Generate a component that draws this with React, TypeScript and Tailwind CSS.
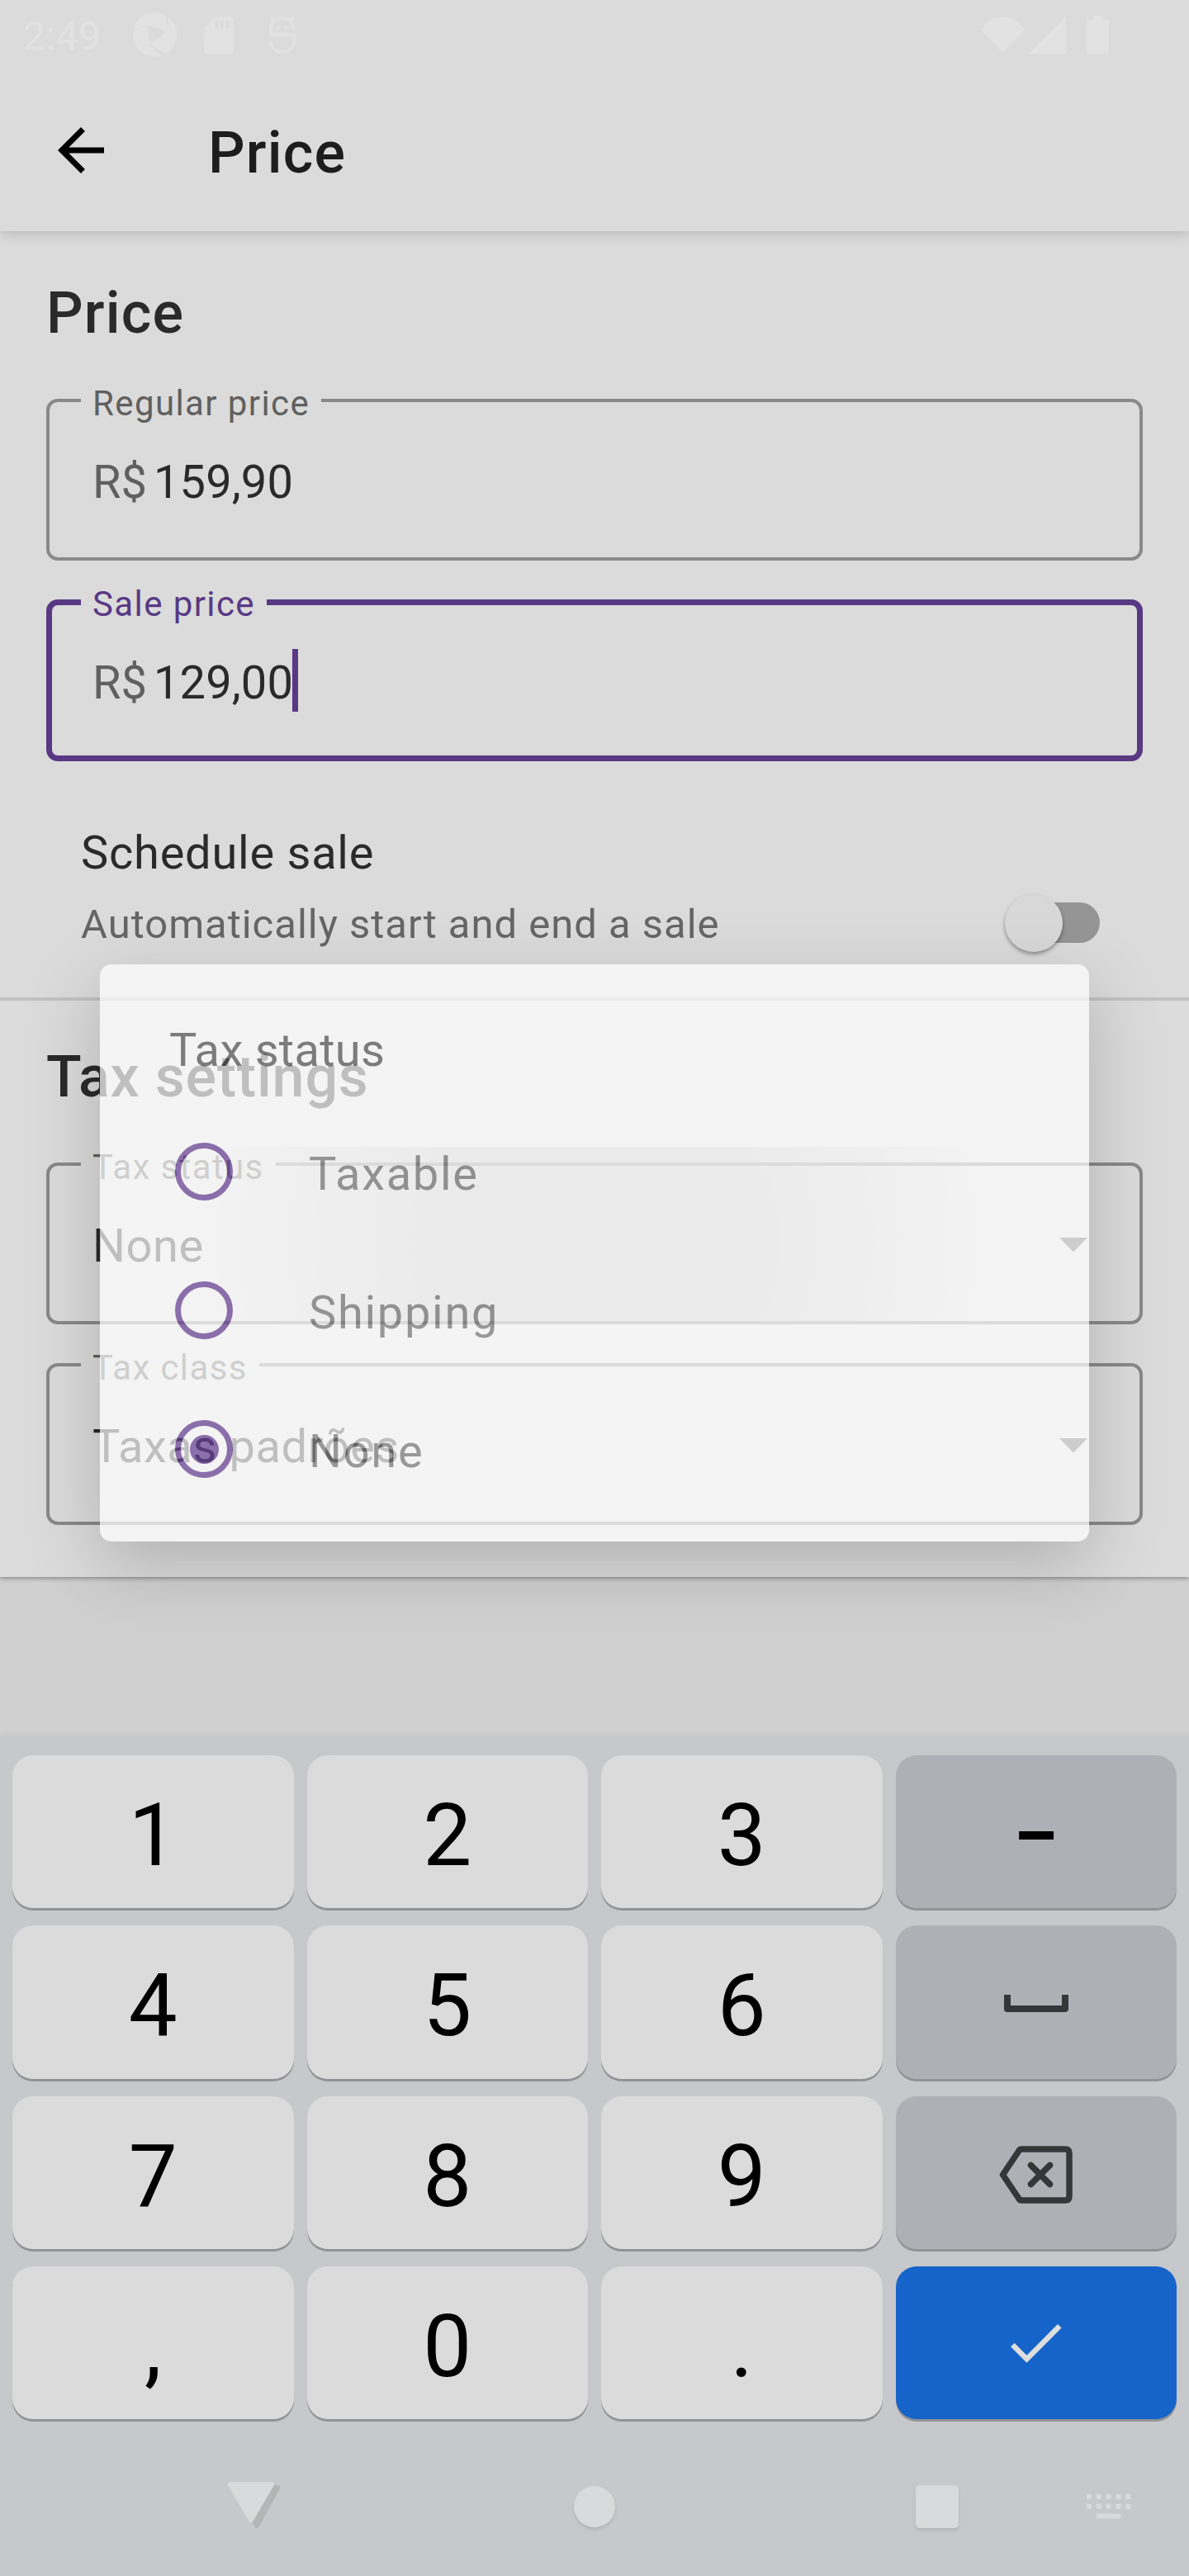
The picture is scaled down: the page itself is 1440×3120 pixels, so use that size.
import React from "react";

function Field({
  label,
  value,
  prefix,
  focused = false,
  select = false,
}: {
  label: string;
  value: string;
  prefix?: string;
  focused?: boolean;
  select?: boolean;
}) {
  return (
    <fieldset
      className={
        "flex h-[196px] flex-col rounded-[14px] " +
        (focused ? "border-[7px] border-[#593983]" : "border-4 border-[#898989]")
      }
    >
      <legend
        className={
          "whitespace-nowrap px-[14px] text-[42px] " +
          (focused
            ? "ml-[35px] h-[7px] leading-[7px] text-[#593983]"
            : "ml-[38px] h-[4px] leading-[4px] text-[#606060]")
        }
      >
        <span className={"relative tracking-[1.4px] " + (focused ? "top-[2px]" : "top-[4px]")}>{label}</span>
      </legend>
      <div
        className={
          "flex items-center text-[56px] leading-[64px] " + (focused ? "pl-[49px] pt-[62px]" : "pl-[52px] pt-[65px]")
        }
      >
        {prefix && <span className="mr-[8px] text-[#606060]">{prefix}</span>}
        <span className={(prefix ? "tracking-[0.1px]" : "tracking-[0.6px]") + " text-[#2a2a2a]"}>{value}</span>
        {focused && <span className="-my-2 -ml-px h-[76px] w-[7px] translate-y-[-3px] bg-[#593983]" />}
        {select && (
          <svg viewBox="0 0 34 18" className="-mt-[3px] ml-auto mr-[63px] h-[18px] w-[34px] fill-[#585858]">
            <path d="M0 0h34L17 17.5z" />
          </svg>
        )}
      </div>
    </fieldset>
  );
}

function StatusBar() {
  return (
    <div className="flex h-[84px] items-center text-[#e2e2e2]">
      <span className="ml-[28px] w-[132px] pt-[4px] text-[49px] leading-[56px]">2:49</span>
      <svg viewBox="0 0 54 54" className="ml-[1px] h-[54px] w-[54px]" fill="currentColor">
        <path d="M0 22A27 27 0 0 1 39 3Q43 13 39 24Q24 10 0 22z" />
        <path d="M43 6A27 27 0 0 1 41 50Q28 47 21 36Q43 29 43 6z" />
        <path d="M0 25Q7 17 19 18Q15 42 36 52A27 27 0 0 1 0 25z" />
      </svg>
      <svg viewBox="0 0 36 45" className="ml-[32px] h-[45px] w-[36px]">
        <path fill="currentColor" d="M13 0h19q4 0 4 4v37q0 4-4 4H4q-4 0-4-4V14z" />
        <path className="stroke-[#dbdbdb]" strokeWidth="4" d="M15.500 5v9M22 5v9M28.500 5v9" />
      </svg>
      <svg viewBox="0 0 32 45" className="ml-[43px] h-[45px] w-[32px]" fill="none" stroke="currentColor" strokeWidth="4">
        <path d="M30 16v-1A14 13 0 0 0 2 15v7h28v9a14 12 0 0 1-28 0v-2M5 5L2 1M27 5l3-4" />
        <path d="M11 11.500v4M20.500 11.500v4" />
      </svg>
      <svg viewBox="0 0 53 45" className="ml-[830px] h-[45px] w-[53px]" fill="currentColor">
        <path d="M0 16Q11 0 26.500 0T53 16L26.500 44z" />
      </svg>
      <svg viewBox="0 0 45 45" className="ml-[5px] h-[45px] w-[45px]" fill="currentColor">
        <path d="M45 0v45H0z" />
      </svg>
      <svg viewBox="0 0 27 46" className="ml-[25px] h-[46px] w-[27px]" fill="currentColor">
        <path d="M8 0h11v5h5q3 0 3 3v35q0 3-3 3H3q-3 0-3-3V8q0-3 3-3h5z" />
      </svg>
    </div>
  );
}

function Key({ children, tone = "light" }: { children: React.ReactNode; tone?: "light" | "gray" | "blue" }) {
  const bg = tone === "light" ? "bg-[#dbdbdb]" : tone === "gray" ? "bg-[#afb0b5]" : "bg-[#1663c9]";
  return (
    <div
      className={
        "flex items-center justify-center rounded-[25px] text-[105px] leading-none text-black shadow-[0_3px_0_#929396] " + bg
      }
    >
      {children}
    </div>
  );
}

function Digit({ children }: { children: React.ReactNode }) {
  return <span className="pt-[10px]">{children}</span>;
}

function Keyboard() {
  return (
    <div className="relative flex h-[1017px] flex-col bg-[#c7c8cc] pt-[23px] shadow-[0_-3px_6px_rgba(0,0,0,0.04)]">
      <div className="grid h-[804px] grid-cols-4 grid-rows-4 gap-x-[16px] gap-y-[21px] px-[15px]">
        <Key><Digit>1</Digit></Key>
        <Key><Digit>2</Digit></Key>
        <Key><Digit>3</Digit></Key>
        <Key tone="gray"><span className="scale-x-80 pt-[12px] font-medium">–</span></Key>
        <Key><Digit>4</Digit></Key>
        <Key><Digit>5</Digit></Key>
        <Key><Digit>6</Digit></Key>
        <Key tone="gray">
          <svg viewBox="0 0 78 21" className="mt-[3px] h-[21px] w-[78px]" fill="none" stroke="#353638" strokeWidth="8" strokeLinejoin="round">
            <path d="M4 0v17h70V0" />
          </svg>
        </Key>
        <Key><Digit>7</Digit></Key>
        <Key><Digit>8</Digit></Key>
        <Key><Digit>9</Digit></Key>
        <Key tone="gray">
          <svg viewBox="0 0 89 70" className="mt-[6px] h-[70px] w-[89px]" fill="none" stroke="#353638" strokeWidth="7.500" strokeLinejoin="round" strokeLinecap="round">
            <path d="M27 4h53q5 0 5 5v52q0 5-5 5H27q-2 0-3-2L4.500 35 24 6q1-2 3-2z" />
            <path d="M38.500 23.500l23 23M61.500 23.500l-23 23" />
          </svg>
        </Key>
        <Key><Digit>,</Digit></Key>
        <Key><Digit>0</Digit></Key>
        <Key><Digit>.</Digit></Key>
        <Key tone="blue">
          <svg viewBox="0 0 62 47" className="mt-[3px] h-[47px] w-[62px]" fill="none" stroke="#dedede" strokeWidth="6.500">
            <path d="M2.300 25L19.500 42.200 59.300 2.300" />
          </svg>
        </Key>
      </div>
      <div className="flex h-[190px] items-center pt-[22px]">
        <svg viewBox="0 0 68 60" className="ml-[276px] h-[60px] w-[68px]">
          <path d="M10 7h50L35 53z" fill="#b4b5b7" stroke="#b4b5b7" strokeWidth="6" strokeLinejoin="round" />
          <path d="M3 3h50L28 46z" fill="#d9dadc" stroke="#d9dadc" strokeWidth="6" strokeLinejoin="round" />
        </svg>
        <div className="ml-[351px] h-[50px] w-[50px] rounded-full bg-[#d9dadc] shadow-[0_3px_4px_rgba(0,0,0,0.1)]" />
        <div className="ml-[364px] h-[52px] w-[52px] rounded-[5px] bg-[#d9dadc] shadow-[0_3px_4px_rgba(0,0,0,0.1)]" />
        <svg viewBox="0 0 54 30" className="ml-[155px] h-[30px] w-[54px]" fill="#d9dadc">
          {[0, 11.8, 23.6, 35.4, 47.2].map((x) => (
            <React.Fragment key={x}>
              <rect x={x} y="0" width="6" height="6" />
              <rect x={x} y="11.800" width="6" height="6" />
            </React.Fragment>
          ))}
          <rect x="11.800" y="23.500" width="29.500" height="6" />
        </svg>
      </div>
    </div>
  );
}

function Option({ label, checked = false }: { label: string; checked?: boolean }) {
  return (
    <div className="flex h-[168px] items-center pl-[91px]">
      <div className="flex h-[70px] w-[70px] items-center justify-center rounded-full border-[7px] border-[#6a4298]">
        {checked && <div className="h-[35px] w-[35px] rounded-full bg-[#6a4298]" />}
      </div>
      <span className="ml-[92px] pt-[5px] text-[56px] leading-[64px] tracking-[1.7px] text-[#7d7d7d]">{label}</span>
    </div>
  );
}

export default function App() {
  return (
    <div className="relative flex h-[3120px] w-[1440px] flex-col overflow-hidden bg-[#d0d0d0] font-['Roboto',sans-serif]">
      <header className="relative z-10 h-[280px] bg-[#dbdbdb] shadow-[0_3px_14px_rgba(0,0,0,0.17)]">
        <StatusBar />
        <div className="flex h-[196px] items-center pl-[56px]">
          <svg viewBox="0 0 24 24" className="h-[84px] w-[84px] fill-black">
            <path d="M20 11H7.830l5.590-5.590L12 4l-8 8 8 8 1.410-1.410L7.830 13H20v-2z" />
          </svg>
          <h1 className="ml-[112px] pt-[6px] text-[70px] font-medium leading-[84px] tracking-[1.2px] text-[#1d1d1d]">Price</h1>
        </div>
      </header>

      <main className="relative h-[1630px] bg-[#dbdbdb] pt-[57px] shadow-[0_2px_5px_rgba(0,0,0,0.32)]">
        <section className="px-[56px]">
          <h2 className="mb-[62px] text-[70px] font-medium leading-[84px] tracking-[1.2px] text-[#2a2a2a]">Price</h2>
          <div className="flex flex-col gap-[47px]">
            <Field label="Regular price" prefix="R$" value="159,90" />
            <Field label="Sale price" prefix="R$" value="129,00" focused />
          </div>
        </section>

        <div className="mt-[75px] flex h-[156px] items-end justify-between pl-[98px] pr-[108px]">
          <div className="flex h-full flex-col">
            <span className="text-[56px] leading-[72px] tracking-[0.750px] text-[#2a2a2a]">Schedule sale</span>
            <span className="mt-[21px] text-[49px] leading-[60px] tracking-[0.980px] text-[#666666]">
              Automatically start and end a sale
            </span>
          </div>
          <div className="flex h-[71px] w-[115px] items-center">
            <div className="relative z-10 h-[70px] w-[70px] rounded-full bg-[#d8d8d8] shadow-[0_3px_5px_rgba(0,0,0,0.35)]" />
            <div className="-ml-[52px] -mt-px h-[49px] w-[97px] rounded-full bg-[#959595]" />
          </div>
        </div>

        <div className="mt-[55px] h-[4px] bg-[#c1c1c1]" />

        <section className="px-[56px] pt-[50px]">
          <h2 className="text-[70px] font-medium leading-[84px] tracking-[0.8px] text-[#2a2a2a]">Tax settings</h2>
          <div className="mt-[43px] bg-[radial-gradient(circle_500px_at_664px_115px,rgba(0,0,0,0.14)_40%,rgba(0,0,0,0.07)_72%,transparent_100%)] pt-[19px]">
            <Field label="Tax status" value="None" select />
          </div>
          <div className="mt-[47px]">
            <Field label="Tax class" value="Taxas padrões" select />
          </div>
        </section>
      </main>

      <div className="h-[193px]" />
      <Keyboard />

      <div
        role="dialog"
        className="absolute left-[121px] top-[1168px] z-20 h-[699px] w-[1198px] rounded-[14px] bg-white opacity-70 shadow-[0_28px_84px_rgba(0,0,0,0.27)]"
      >
        <div className="h-[167px] pl-[84px] pt-[71px] text-[56px] leading-[66px] tracking-[0.3px] text-[#555555]">Tax status</div>
        <Option label="Taxable" />
        <Option label="Shipping" />
        <Option label="None" checked />
      </div>
    </div>
  );
}
